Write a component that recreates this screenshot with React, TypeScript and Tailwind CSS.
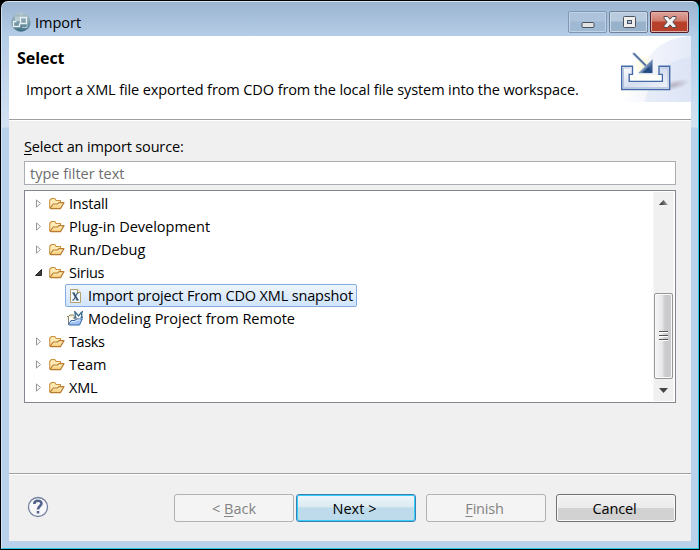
import React from "react";

function AppIcon() {
  return (
    <svg className="mt-px h-5 w-5" viewBox="0 0 20 20">
      <defs>
        <linearGradient id="ball" x1="0" y1="0" x2="0" y2="1">
          <stop offset="0" stopColor="#b4c5cd" />
          <stop offset="0.5" stopColor="#7d9fae" />
          <stop offset="1" stopColor="#3c6b80" />
        </linearGradient>
      </defs>
      <circle cx="10" cy="10" r="9.7" fill="url(#ball)" />
      <path d="M2.500 9.500V14.500H8.500V11.500M2 9.500H5.500M9.500 5.500H15.500V11.500H9.500Z" fill="none" stroke="#eaf1f4" strokeWidth="1.400" />
      <path d="M4 4.500H9V9H4Z" fill="#b9cbd3" />
      <path d="M10 1V5M11 15.500H16M16 12.500V15" stroke="#b5cdd6" strokeWidth="1" fill="none" />
    </svg>
  );
}

function ImportBanner() {
  return (
    <svg className="h-[66px] w-[71px] shrink-0" viewBox="0 0 71 66">
      <defs>
        <linearGradient id="sky" x1="0" y1="0" x2="1" y2="0">
          <stop offset="0" stopColor="#ffffff" />
          <stop offset="0.5" stopColor="#f1f3fb" />
          <stop offset="1" stopColor="#e4eaf8" />
        </linearGradient>
        <linearGradient id="tray" x1="0" y1="0" x2="1" y2="1">
          <stop offset="0" stopColor="#ffffff" />
          <stop offset="0.5" stopColor="#d6deef" />
          <stop offset="1" stopColor="#f4f7fc" />
        </linearGradient>
        <linearGradient id="arrow" x1="0" y1="0" x2="1" y2="0.9">
          <stop offset="0.3" stopColor="#c6d2e4" />
          <stop offset="0.75" stopColor="#3c5f97" />
          <stop offset="1" stopColor="#2a4c84" />
        </linearGradient>
        <radialGradient id="glow">
          <stop offset="0" stopColor="#fdfbd5" />
          <stop offset="1" stopColor="#fdfbd5" stopOpacity="0" />
        </radialGradient>
        <radialGradient id="shade">
          <stop offset="0" stopColor="#a39cac" stopOpacity="0.7" />
          <stop offset="1" stopColor="#a39cac" stopOpacity="0" />
        </radialGradient>
      </defs>
      <path d="M0 66C15 55 18 28 37 12C47 4 57 1 71 0V66Z" fill="url(#sky)" />
      <path d="M25 66C29 43 43 24 71 21V66Z" fill="#cfdaf2" opacity="0.35" />
      <ellipse cx="54" cy="49" rx="16" ry="5" fill="url(#shade)" transform="rotate(-14 54 49)" />
      <ellipse cx="23" cy="29" rx="10" ry="11" fill="url(#glow)" />
      <path
        d="M1.700 30.200H12.500V38.500H9.200V45.300H42.300V38.500H39V30.200H49.700V53.500H1.700Z"
        fill="url(#tray)" stroke="#456ca9" strokeWidth="1.400"
      />
      <path d="M3.500 32V51.700H48V32H41M3.500 32H10.500" fill="none" stroke="#b5c3de" strokeWidth="1" />
      <path d="M10 39V44.600H41.500V39Z" fill="#fffffa" />
      <path d="M13 17L26 30" stroke="#8aa0c1" strokeWidth="2.400" />
      <path d="M14 17.500L26 29.500" stroke="#4d6c9a" strokeWidth="1.200" />
      <path d="M32.500 23.500V37H18.500Z" fill="url(#arrow)" stroke="#8ca0bd" strokeWidth="0.500" />
      <path d="M22 36.500L29 31L32 37Z" fill="#244a82" />
    </svg>
  );
}

function Folder() {
  return (
    <svg className="h-4 w-4 shrink-0" viewBox="0 0 16 16">
      <defs>
        <linearGradient id="fold" x1="0" y1="0" x2="0" y2="1">
          <stop offset="0" stopColor="#fff2c4" />
          <stop offset="1" stopColor="#f7cb73" />
        </linearGradient>
      </defs>
      <path d="M.7 12V4.300L2.500 2.500H5.800L7.200 4.500H11.500V7" fill="#fdeab5" stroke="#cb9140" strokeWidth="1.100" />
      <path d="M1 12.300L4.200 8H8.500L10 6.600H15L11.500 12.600H1.800Z" fill="url(#fold)" stroke="#b97a31" strokeWidth="1.100" strokeLinejoin="round" />
    </svg>
  );
}

function XmlFile() {
  return (
    <svg className="h-4 w-4 shrink-0" viewBox="0 0 16 16">
      <path d="M2.500 1.500H9.700L12.500 4.300V14.500H2.500Z" fill="#f2f8fd" stroke="#b5a16b" />
      <path d="M9.500 1.500V4.500H12.500" fill="#fff0bd" stroke="#b5a16b" />
      <path d="M5.500 5L9.500 12" stroke="#314f6d" strokeWidth="1.800" fill="none" />
      <path d="M4.300 5H6.500M4.300 12H6.300M8.500 12H10.700M8.700 5H10.500M9.500 5L5.500 12" stroke="#314f6d" strokeWidth="1" fill="none" />
    </svg>
  );
}

function ModelFolder() {
  return (
    <svg className="h-4 w-4 shrink-0" viewBox="0 0 16 16">
      <path d="M1.500 13.500V5.500H0M1.500 5.500L3 4H7V8H12" fill="#fff0bd" stroke="#84806f" />
      <path d="M1.500 13.500L4 9.500H8L9.500 8H15.300L12.500 14H2Z" fill="#9fc1f3" stroke="#3467a7" />
      <path d="M3.500 12L5 10.500H8.500L10 9H13.500" stroke="#e4f0ff" fill="none" />
      <path d="M8.200 7V1L11.500 5L14.700 1V7" fill="none" stroke="#fff" strokeWidth="3" />
      <path d="M8.200 7V1L11.500 5L14.700 1V7M7 6.500H9.500M13.500 6.500H16M7 .7H8.500M14.500 .7H16" fill="none" stroke="#416e8d" strokeWidth="1.400" />
    </svg>
  );
}

function Row({ label, open = false, track = "" }: { label: string; open?: boolean; track?: string }) {
  return (
    <div className="flex h-[23px] items-center pl-[9px]">
      <svg className="h-[9px] w-[9px] shrink-0" viewBox="0 0 9 9">
        {open
          ? <path d="M7.500 1.500V7.500H1.500Z" fill="#404040" stroke="#262626" />
          : <path d="M2.500 .9V8.100L6.500 4.500Z" fill="#fff" stroke="#989898" />}
      </svg>
      <span className="ml-[6px] flex"><Folder /></span>
      <span className={`ml-1 ${track}`}>{label}</span>
    </div>
  );
}

function Glyph({ kind }: { kind: "min" | "max" | "close" }) {
  return (
    <svg className="h-4 w-4" viewBox="0 0 16 16">
      {kind === "min" && <rect x="2" y="8.500" width="12" height="5" rx="1" fill="#e3e3e3" stroke="#4b525c" />}
      {kind === "max" && <><rect x="2.500" y="2.500" width="12" height="11" rx="1" fill="#efefef" stroke="#4b525c" /><rect x="6.500" y="6.500" width="4" height="3" fill="#a9c3de" stroke="#4b525c" /></>}
      {kind === "close" && <path d="M2 2.500H5.500L8 5.200L10.500 2.500H14V4.200L10.800 8L14 11.800V13.500H10.500L8 10.800L5.500 13.500H2V11.800L5.200 8L2 4.200Z" fill="#f2f2f2" stroke="#4f4750" strokeLinejoin="round" />}
    </svg>
  );
}

export default function App() {
  return (
    <div className="h-[550px] w-[700px] overflow-hidden bg-black pt-px pl-px font-['Open_Sans','Noto_Sans',sans-serif] text-[14.5px] leading-[20px] text-black">
      <main className="flex h-[548px] w-[698px] flex-col overflow-hidden rounded-t-[7px] border-r border-b border-r-[#27c9e5] border-b-[#27c9e5] border-l border-l-[#d0e2f4] border-t border-t-[#d9e5f1] bg-[linear-gradient(to_bottom,#b5cde7_34px,#d3e2f3_125px,#b9d1ea_126px)] pl-[7px]">
        <header className="-ml-[7px] flex h-[34px] shrink-0 bg-linear-to-b from-[#9bb4d0] to-[#b5cde7] pl-[9px]">
          <div className="mt-[9px]"><AppIcon /></div>
          <span className="mt-[11px] ml-[4px]">Import</span>
          <div className="mt-[9px] mr-[9px] ml-auto flex h-[22px] gap-[2px]">
            <div className="flex w-[39px] items-center justify-center rounded-[2px] border border-[#8098b5] bg-linear-to-b from-[#adc3dc] from-45% to-[#9fb8d3] to-50% shadow-[inset_0_0_0_1px_#c0d2e5]"><Glyph kind="min" /></div>
            <div className="flex w-[39px] items-center justify-center rounded-[2px] border border-[#6e829b] bg-linear-to-b from-[#b7cade] from-45% to-[#98b2cc] to-50% shadow-[inset_0_0_0_1px_#cbd9e6]"><Glyph kind="max" /></div>
            <div className="flex w-[39px] items-center justify-center rounded-[2px] border border-[#531d2a] bg-linear-to-b from-[#e0a79e] from-0% via-[#cd7b6b] via-45% to-[#b7402b] to-50% shadow-[inset_0_0_0_1px_#e0ada7]"><Glyph kind="close" /></div>
          </div>
        </header>

        <div className="flex h-[505px] w-[682px] shrink-0 flex-col bg-[#f0f0f0]">
          <section className="flex h-[84px] shrink-0 justify-between border-b border-[#a0a0a0] bg-white">
            <div>
              <h1 className="mt-[12px] ml-[8px] text-[16px] font-bold tracking-[-0.050px]">Select</h1>
              <p className="mt-[12px] ml-[17px] whitespace-nowrap tracking-[-0.100px]">Import a XML file exported from CDO from the local file system into the workspace.</p>
            </div>
            <ImportBanner />
          </section>

          <section className="h-[353px] shrink-0 border-t border-white px-[15px] pt-[16px]">
            <div className="h-[24px] whitespace-nowrap tracking-[-0.160px]"><span className="underline underline-offset-2">S</span>elect an import source:</div>
            <input className="block h-[24px] w-full border border-[#abadb3] bg-white px-[5px] text-[#6d6d6d] outline-none placeholder:text-[#6d6d6d]" placeholder="type filter text" />
            <div className="mt-[5px] flex h-[213px] justify-between border border-[#828790] bg-white py-px pr-px">
              <div className="whitespace-nowrap">
                <Row label="Install" track="tracking-[-0.200px]" />
                <Row label="Plug-in Development" />
                <Row label="Run/Debug" />
                <Row label="Sirius" open track="tracking-[-0.300px]" />
                <div className="ml-[40px] flex h-[23px] w-[292px] items-center rounded-[2px] border border-[#84acdd] bg-linear-to-b from-[#edf5fe] to-[#d0e4fc] pl-[2px]">
                  <XmlFile /><span className="ml-[4px] tracking-[-0.150px]">Import project From CDO XML snapshot</span>
                </div>
                <div className="ml-[42px] flex h-[23px] items-center"><ModelFolder /><span className="ml-[5px]">Modeling Project from Remote</span></div>
                <Row label="Tasks" track="tracking-[-0.400px]" />
                <Row label="Team" track="tracking-[-0.100px]" />
                <Row label="XML" track="tracking-[-0.150px]" />
              </div>
              <div className="flex w-[21px] flex-col items-center border-x border-[#f8f8f8] bg-[#f0f0f0]">
                <svg className="mt-[8px] h-[5px] w-[9px]" viewBox="0 0 9 5"><defs><linearGradient id="up"><stop stopColor="#222" /><stop offset="1" stopColor="#aaa" /></linearGradient></defs><path d="M0 5L4.500 0L9 5Z" fill="url(#up)" /></svg>
                <div className="mt-[88px] flex h-[86px] w-[19px] flex-col items-center justify-center gap-[2px] rounded-[2px] border border-[#969696] bg-linear-to-r from-[#f5f5f5] from-0% via-[#e9e9eb] via-40% to-[#cacacd] to-60% shadow-[inset_0_0_0_1px_#f9f9f9]">
                  <span className="h-[2px] w-[9px] border-b border-white bg-[#555]" /><span className="h-[2px] w-[9px] border-b border-white bg-[#555]" /><span className="h-[2px] w-[9px] border-b border-white bg-[#555]" />
                </div>
                <svg className="mt-[9px] h-[5px] w-[9px]" viewBox="0 0 9 5"><path d="M0 0H9L4.500 5Z" fill="#444" /></svg>
              </div>
            </div>
          </section>

          <footer className="flex h-[68px] items-start border-t border-[#a0a0a0] pl-[18px] shadow-[inset_0_1px_0_white]">
            <svg className="mt-[22px] h-[22px] w-[22px]" viewBox="0 0 22 22"><circle cx="11" cy="11" r="9.500" fill="#f8f8fa" stroke="#7480a0" strokeWidth="1.300" /><path d="M7.300 8C7.300 3.700 14.700 3.700 14.500 7.700C14.300 10 11 10 11 13.500" fill="none" stroke="#52638d" strokeWidth="2.600" /><rect x="9.700" y="15" width="2.600" height="2.500" fill="#52638d" /></svg>
            <div className="mt-[20px] ml-[125px] flex h-[28px] text-center leading-[27px]">
              <button className="w-[120px] rounded-[3px] border border-[#adb2b5] bg-[#f4f4f4] text-[#838383]">&lt; <u className="underline-offset-2">B</u>ack</button>
              <button className="ml-[2px] w-[120px] rounded-[3px] border border-[#3c7fb1] bg-linear-to-b from-[#eef6fb] from-0% via-[#dceaf2] via-45% to-[#bddbea] to-50% pr-[3px] shadow-[inset_0_0_0_1px_#35cef8]">Next &gt;</button>
              <button className="ml-[10px] w-[120px] rounded-[3px] border border-[#adb2b5] bg-[#f4f4f4] pr-[3px] text-[#838383] tracking-[-0.200px]"><u className="underline-offset-2">F</u>inish</button>
              <button className="ml-[10px] w-[120px] rounded-[3px] border border-[#707070] bg-linear-to-b from-[#f2f2f2] from-0% via-[#ebebeb] via-49% to-[#d2d2d2] to-51% pr-[3px] tracking-[-0.150px] shadow-[inset_0_0_0_1px_#fafafa]">Cancel</button>
            </div>
          </footer>
        </div>
      </main>
    </div>
  );
}
